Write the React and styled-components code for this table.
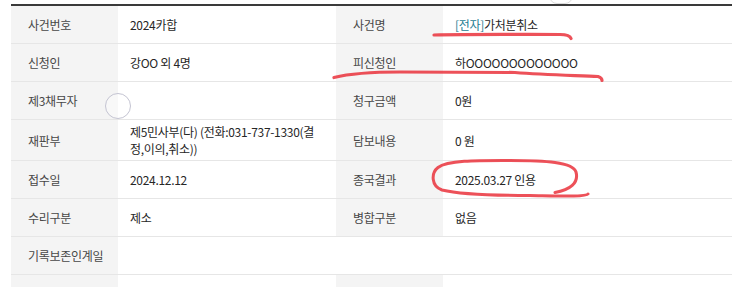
import { Fragment } from 'react'
import styled, { createGlobalStyle } from 'styled-components'

const GlobalStyle = createGlobalStyle`
  html, body {
    margin: 0;
    padding: 0;
    background: #fff;
  }
  body {
    font-family: "Noto Sans CJK KR", "Noto Sans", sans-serif;
  }
`

// ======================= STYLES =======================

const Page = styled.div`
  position: relative;
  width: 745px;
  height: 305px;
  overflow: hidden;
  background: #fff;
`

const Frame = styled.div`
  margin: 4px 0 0 11px;
  width: 721px;
  height: 283px;
  overflow: hidden;
`

const Table = styled.table`
  width: 100%;
  border-collapse: collapse;
  table-layout: fixed;
  border-top: 2px solid #3a3a3a;
  font-size: 12px;
  letter-spacing: -0.3px;
`

const Row = styled.tr`
  border-bottom: 1px solid #e6e6e6;
`

const Label = styled.th`
  height: 31px;
  padding: 3px 0 3px 17px;
  background: #f4f4f4;
  color: #474747;
  font-weight: 400;
  text-align: left;
  vertical-align: middle;
  line-height: 17px;
`

const Value = styled.td`
  height: 31px;
  padding: 3px 14px 3px 12px;
  background: #fff;
  color: #262626;
  vertical-align: middle;
  line-height: 17px;
`

const Tag = styled.span`
  color: #1e7d93;
`

const Marks = styled.svg`
  position: absolute;
  left: 0;
  top: 0;
  pointer-events: none;
`

const Cursor = styled.div`
  position: absolute;
  left: 105px;
  top: 93px;
  width: 24px;
  height: 24px;
  border-radius: 50%;
  border: 1px solid #c4c4d2;
  background: rgba(255, 255, 255, 0.4);
`

const Nub = styled.div`
  position: absolute;
  left: 549px;
  top: -6px;
  width: 22px;
  height: 8px;
  border-radius: 0 0 8px 8px;
  border: 1px solid #dcdcdc;
`

// ======================= DATA =======================

const rows = [
  [['사건번호', '2024카합'], ['사건명', <><Tag>[전자]</Tag>가처분취소</>]],
  [['신청인', '강OO 외 4명'], ['피신청인', '하OOOOOOOOOOOOO']],
  [['제3채무자', ''], ['청구금액', '0원']],
  [['재판부', '제5민사부(다) (전화:031-737-1330(결정,이의,취소))'], ['담보내용', '0 원']],
  [['접수일', '2024.12.12'], ['종국결과', '2025.03.27 인용']],
  [['수리구분', '제소'], ['병합구분', '없음']],
]

const App = () => {
  return (
    <>
      <GlobalStyle />
      <Page>
        <Frame>
          <Table>
            <colgroup>
              <col style={{ width: 107 }} />
              <col style={{ width: 218 }} />
              <col style={{ width: 107 }} />
              <col />
            </colgroup>
            <tbody>
              {rows.map((pair, i) => (
                <Row key={i}>
                  {pair.map(([label, value]) => (
                    <Fragment key={label}>
                      <Label>{label}</Label>
                      <Value>{value}</Value>
                    </Fragment>
                  ))}
                </Row>
              ))}
              <Row>
                <Label>기록보존인계일</Label>
                <Value colSpan={3} />
              </Row>
              <Row>
                <Label />
                <Value />
                <Label />
                <Value />
              </Row>
            </tbody>
          </Table>
        </Frame>

        <Cursor />
        <Nub />

        {/* red pen marks */}
        <Marks width='745' height='305' viewBox='0 0 745 305'>
          <g fill='none' stroke='#e8262f' strokeOpacity='0.8' strokeLinecap='round' strokeLinejoin='round'>
            <path d='M434 35 C470 34 520 34.5 560 34.5 C566 34.5 570 35.5 571 38.5' strokeWidth='3.2' />
            <path d='M334 77.5 C350 73.5 372 72 400 72 L515 72.5 C545 75 580 75.5 598 76.5 C601 77.5 602 78.5 602 80.5' strokeWidth='3.2' />
            <path d='M588 194 C586 197 560 196 530 195.5 C500 195.5 462 195 442 190 C431 186 431 173 438 167.5 C448 160 480 160.5 510 160.5 C545 160.5 573 162 576 172 C579 183 570 190 555 192.5' strokeWidth='3' />
          </g>
        </Marks>
      </Page>
    </>
  )
}

export default App
